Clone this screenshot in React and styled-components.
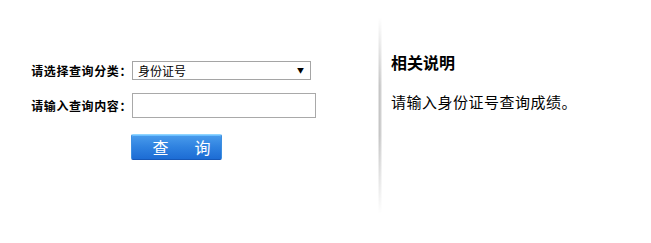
import styled, { createGlobalStyle } from "styled-components";

const GlobalStyle = createGlobalStyle`
    html, body {
        margin: 0;
        padding: 0;
        background: #ffffff;
    }
    body {
        font-family: "Noto Sans CJK SC", "DejaVu Sans", sans-serif;
        color: #000;
    }
`

export default function App() {
    return (
        <>
            <GlobalStyle />
            <Page>
                <LeftPanel>
                    <Form onSubmit={(e) => e.preventDefault()}>
                        <Label>请选择查询分类：</Label>
                        <SelectBox>
                            <span>身份证号</span>
                            <Arrow>▼</Arrow>
                        </SelectBox>

                        <Label>请输入查询内容：</Label>
                        <TextInput type="text" />

                        <Spacer />
                        <QueryButton type="submit">
                            <span>查</span>
                            <span>询</span>
                        </QueryButton>
                    </Form>
                </LeftPanel>

                <Divider />

                <RightPanel>
                    <Title>相关说明</Title>
                    <Note>请输入身份证号查询成绩。</Note>
                </RightPanel>
            </Page>
        </>
    )
}

const Page = styled.div`
    display: flex;
    width: 651px;
    height: 243px;
`

const LeftPanel = styled.div`
    width: 378px;
    padding-top: 61px;
    box-sizing: border-box;
`

const Form = styled.form`
    display: grid;
    grid-template-columns: 128px auto;
    column-gap: 4px;
    row-gap: 13px;
    align-items: center;
    justify-items: start;
    margin: 0;
`

const Label = styled.label`
    justify-self: end;
    margin-right: -4px;
    font-size: 12px;
    font-weight: bold;
    line-height: 14px;
    letter-spacing: 0.6px;
`

const SelectBox = styled.div`
    display: flex;
    justify-content: space-between;
    align-items: center;
    width: 179px;
    height: 19px;
    box-sizing: border-box;
    border: 1px solid #a5a5a5;
    padding: 0 6px 0 5px;
    font-size: 12px;
`

const Arrow = styled.span`
    font-size: 7px;
    line-height: 1;
`

const TextInput = styled.input`
    width: 184px;
    height: 25px;
    box-sizing: border-box;
    border: 1px solid #a9a9a9;
    padding: 0 4px;
    margin: 0;
    outline: none;
`

const Spacer = styled.div``

const QueryButton = styled.button`
    display: flex;
    justify-content: center;
    align-items: center;
    gap: 26px;
    width: 91px;
    height: 26px;
    margin: 3px 0 0 -1px;
    box-sizing: border-box;
    border: 1px solid #3e8fe0;
    border-top-color: #8fd4ff;
    border-bottom-color: #1658b8;
    border-radius: 2px;
    background: linear-gradient(to bottom, #4a9cec 0%, #2f82e0 50%, #1d6cd4 100%);
    box-shadow: inset 0 1px 0 #6cc0ff;
    color: #ffffff;
    font-family: "Noto Sans CJK SC", sans-serif;
    font-size: 16px;
    line-height: 22px;
    padding: 0 0 0 10px;
    cursor: pointer;
`

const Divider = styled.div`
    width: 4px;
    height: 197px;
    margin-top: 17px;
    background: linear-gradient(to right, #f2f2f2 0%, #bdbdbd 45%, #dcdcdc 75%, #f6f6f6 100%);
    -webkit-mask-image: linear-gradient(to bottom, transparent 0%, #000 35%, #000 60%, transparent 100%);
    mask-image: linear-gradient(to bottom, transparent 0%, #000 35%, #000 60%, transparent 100%);
`

const RightPanel = styled.div`
    padding: 51px 0 0 9px;
`

const Title = styled.h3`
    margin: 0;
    font-size: 16px;
    font-weight: bold;
    line-height: 22px;
`

const Note = styled.p`
    margin: 18px 0 0 0;
    font-size: 15px;
    line-height: 22px;
    letter-spacing: 0.5px;
`
